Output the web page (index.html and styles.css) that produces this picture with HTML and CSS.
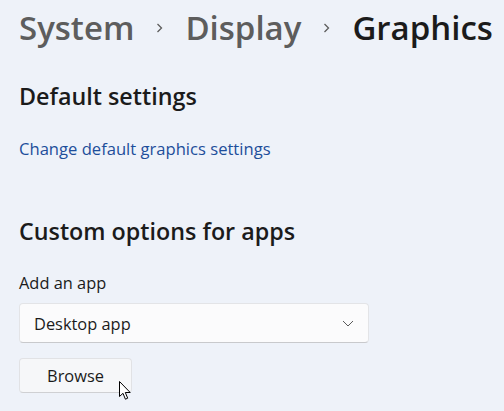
FILE: index.html
```html
<!DOCTYPE html>
<html lang="en">
<head>
<meta charset="utf-8">
<link rel="stylesheet" href="styles.css">
</head>
<body>
<main class="page">
  <h1 class="crumbs">
    <span class="crumb">System</span>
    <svg class="sep" width="7" height="10" viewBox="0 0 7 10"><polyline points="1.5,1 5.5,5 1.5,9" fill="none" stroke="#5d5d5d" stroke-width="1.3"/></svg>
    <span class="crumb">Display</span>
    <svg class="sep" width="7" height="10" viewBox="0 0 7 10"><polyline points="1.5,1 5.5,5 1.5,9" fill="none" stroke="#5d5d5d" stroke-width="1.3"/></svg>
    <span class="crumb current">Graphics</span>
  </h1>

  <section class="group">
    <h2 class="subtitle">Default settings</h2>
    <a class="link" href="#">Change default graphics settings</a>
  </section>

  <section class="group custom">
    <h2 class="subtitle">Custom options for apps</h2>
    <label class="label">Add an app</label>
    <div class="select">
      <span class="select-text">Desktop app</span>
      <svg class="chev" width="12" height="7" viewBox="0 0 12 7"><polyline points="1,1 6,6 11,1" fill="none" stroke="#5a5a5a" stroke-width="1"/></svg>
    </div>
    <div class="btn-wrap">
      <button class="btn">Browse</button>
      <svg class="cursor" width="13" height="20" viewBox="0 0 13 20"><path d="M0.5 0.5 L0.5 15.5 L4 12.3 L6.4 18.2 L8.7 17.2 L6.3 11.5 L11.2 11.5 Z" fill="#fff" stroke="#000" stroke-width="1" stroke-linejoin="round"/></svg>
    </div>
  </section>
</main>
</body>
</html>
```

FILE: styles.css
```css
html, body {
  margin: 0;
  padding: 0;
}
body {
  background: #eef2f9;
  font-family: "Open Sans", "Noto Sans", sans-serif;
  color: #1b1b1b;
  width: 504px;
  height: 411px;
  overflow: hidden;
}
.page {
  padding: 8px 0 0 19px;
}
.crumbs {
  display: flex;
  align-items: center;
  gap: 22px;
  margin: 0;
  font-size: 33px;
  font-weight: 600;
  line-height: 40px;
  white-space: nowrap;
}
.crumb {
  color: #5d5d5d;
}
.crumb.current {
  color: #1b1b1b;
}
.sep {
  flex: none;
}
.group {
  display: flex;
  flex-direction: column;
  align-items: flex-start;
}
.subtitle {
  margin: 33px 0 0;
  font-size: 23.3px;
  font-weight: 600;
  line-height: 30px;
  color: #1b1b1b;
}
.link {
  margin-top: 27px;
  font-size: 16.6px;
  line-height: 22px;
  color: #1d4e9b;
  text-decoration: none;
}
.custom .subtitle {
  margin-top: 56px;
}
.label {
  margin-top: 26px;
  font-size: 16.4px;
  line-height: 22px;
  color: #1b1b1b;
}
.select {
  margin-top: 9px;
  box-sizing: border-box;
  width: 350px;
  height: 40px;
  display: flex;
  align-items: center;
  justify-content: space-between;
  padding: 0 14px 0 14px;
  background: #fbfbfc;
  border: 1px solid #e3e4e7;
  border-bottom-color: #c8c9cc;
  border-radius: 4px;
}
.select-text {
  font-size: 16.4px;
  color: #1b1b1b;
}
.btn-wrap {
  position: relative;
  margin-top: 15px;
}
.btn {
  box-sizing: border-box;
  width: 113px;
  height: 35px;
  font-family: inherit;
  font-size: 16.4px;
  color: #1b1b1b;
  background: #f6f7f9;
  border: 1px solid #e1e2e5;
  border-bottom-color: #cfd0d3;
  border-radius: 4px;
  padding: 0;
}
.cursor {
  position: absolute;
  left: 100px;
  top: 23px;
}
```
